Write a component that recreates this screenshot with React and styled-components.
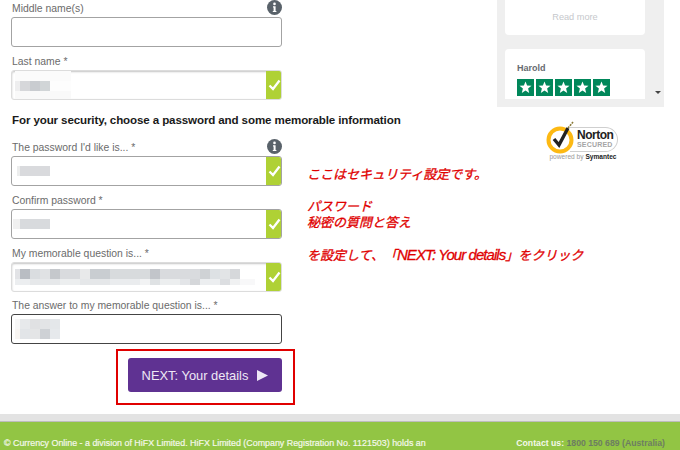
import React from "react";
import styled, { createGlobalStyle } from "styled-components";

const GlobalStyle = createGlobalStyle`
  html, body {
    margin: 0;
    padding: 0;
    height: 450px;
    overflow: hidden;
    background: #fff;
    font-family: "Liberation Sans", Arial, sans-serif;
  }
`;

const Page = styled.div`
  position: relative;
  width: 680px;
  height: 450px;
  overflow: hidden;
  display: flex;
  flex-direction: column;
`;

const Main = styled.main`
  display: flex;
  height: 414px;
  flex-shrink: 0;
`;

// form column
const Form = styled.form`
  width: 271px;
  margin-left: 11px;
  display: flex;
  flex-direction: column;
`;

const Field = styled.div`
  margin-top: ${(props) => props.$top ?? 6}px;
`;

const LabelRow = styled.div`
  display: flex;
  justify-content: space-between;
  align-items: flex-start;
  height: 17px;
`;

const Label = styled.label`
  font-size: 10.4px;
  line-height: 18px;
  margin-left: 1px;
  color: #6b6b6b;
`;

const InfoIcon = styled.svg`
  width: 15px;
  height: 15px;
  margin-top: 0;
`;

const borders = {
  plain: "border: 1px solid #a3a3a3;",
  soft: "border: 1px solid #dcdcdc; box-shadow: inset 0 1px 2px #c4c4c4;",
  focus: "border: 1px solid #444;",
};

const InputBox = styled.div`
  box-sizing: border-box;
  height: 30px;
  display: flex;
  align-items: center;
  justify-content: space-between;
  background: #fff;
  border-radius: 3px;
  overflow: hidden;
  ${(props) => borders[props.$tone || "plain"]}
`;

const CheckTab = styled.div`
  width: 16px;
  height: 30px;
  flex-shrink: 0;
  margin-right: -1px;
  background: #afd135;
  display: flex;
  align-items: center;
  justify-content: center;
`;

const Blur = styled.div`
  display: flex;
  flex-direction: column;
  margin-left: ${(props) => props.$left}px;
`;

const BlurRow = styled.div`
  display: flex;
  height: ${(props) => props.$h || 10}px;
`;

const BlurCell = styled.span`
  display: block;
  height: 100%;
  width: ${(props) => props.$w}px;
  background: ${(props) => props.$c};
`;

const Heading = styled.h2`
  margin: 0 0 0 1px;
  height: 39px;
  font-size: 11.6px;
  line-height: 39px;
  letter-spacing: -0.13px;
  font-weight: 700;
  color: #1a1a1a;
  white-space: nowrap;
`;

const NextButton = styled.button`
  box-sizing: border-box;
  width: 154px;
  height: 34px;
  margin: 14px 0 0 auto;
  padding: 0;
  border: 0;
  border-radius: 3px;
  background: #5f3292;
  color: #eee8f5;
  font-family: inherit;
  font-size: 12.9px;
  display: flex;
  align-items: center;
  justify-content: center;
  gap: 9px;
`;

const Triangle = styled.svg`
  width: 11px;
  height: 11px;
`;

// right hand column
const Aside = styled.aside`
  width: 167px;
  margin-left: 215px;
  display: flex;
  flex-direction: column;
  align-items: center;
`;

const Reviews = styled.div`
  position: relative;
  box-sizing: border-box;
  width: 167px;
  height: 107px;
  padding-left: 8px;
  background: #efefef;
  align-self: stretch;
`;

const ReadCard = styled.div`
  box-sizing: border-box;
  width: 140px;
  height: 35px;
  background: #fff;
  border-radius: 0 0 4px 4px;
  font-size: 9.2px;
  line-height: 35px;
  text-align: center;
  color: #c6c8cc;
`;

const ReviewCard = styled.div`
  box-sizing: border-box;
  width: 140px;
  height: 50px;
  margin-top: 14px;
  padding: 13px 12px 0;
  background: #fff;
  border-radius: 4px 4px 0 0;
`;

const Reviewer = styled.div`
  font-size: 9px;
  line-height: 12px;
  font-weight: 700;
  color: #666a70;
`;

const Stars = styled.div`
  display: flex;
  gap: 2px;
  margin-top: 5px;
`;

const Star = styled.svg`
  width: 17px;
  height: 17px;
  background: #00875a;
`;

const ScrollArrow = styled.span`
  position: absolute;
  right: 3px;
  top: 91px;
  width: 0;
  height: 0;
  border-left: 3px solid transparent;
  border-right: 3px solid transparent;
  border-top: 3px solid #444;
`;

const Norton = styled.div`
  margin-top: 14px;
  margin-left: 5px;
  width: 74px;
  display: flex;
  flex-direction: column;
  align-items: center;
`;

const Seal = styled.div`
  display: flex;
  align-items: center;
  height: 33px;
  width: 74px;
`;

const SealMark = styled.svg`
  width: 30px;
  height: 33px;
  flex-shrink: 0;
  z-index: 1;
`;

const SealPill = styled.div`
  box-sizing: border-box;
  height: 25px;
  width: 48px;
  margin-left: -6px;
  margin-top: 3px;
  padding-left: 7px;
  border: 1px solid #cfcfcf;
  border-left: 0;
  border-radius: 0 13px 13px 0;
  display: flex;
  flex-direction: column;
  justify-content: center;
`;

const SealName = styled.span`
  font-size: 12px;
  line-height: 12px;
  font-weight: 700;
  letter-spacing: -0.5px;
  color: #222;
`;

const SealSub = styled.span`
  font-size: 7px;
  line-height: 8px;
  font-weight: 700;
  letter-spacing: 0.2px;
  color: #a5a5a5;
`;

const PoweredBy = styled.div`
  margin-top: -2px;
  font-size: 6.6px;
  line-height: 9px;
  color: #999;
  white-space: nowrap;

  b {
    color: #222;
  }
`;

// footer
const FooterBand = styled.div`
  height: 7px;
  flex-shrink: 0;
  background: #e3e3e3;
  border-bottom: 1px solid #bdbdbd;
`;

const Footer = styled.footer`
  flex: 1;
  background: #92c544;
  display: flex;
  justify-content: space-between;
  padding: 15px 15px 0 4px;
  font-size: 8.7px;
  line-height: 12px;
  color: #f4f8ea;
  white-space: nowrap;
`;

const Legal = styled.span`
  font-size: 8.9px;
  -webkit-text-stroke: 0.2px #f4f8ea;
`;

const Contact = styled.span`
  font-weight: 700;
`;

const Phone = styled.span`
  color: #6d7d62;
`;

// screenshot annotations lying over the page
const Note = styled.div`
  position: absolute;
  left: 307px;
  top: 167px;
  font-family: "Liberation Sans", "Noto Sans CJK JP", sans-serif;
  font-size: 13px;
  line-height: 16px;
  font-style: italic;
  color: #e00000;
  white-space: pre;
  text-spacing-trim: space-all;
  -webkit-text-stroke: 0.3px #e00000;
`;

const NoteLatin = styled.span`
  font-size: 15px;
  letter-spacing: -0.95px;
`;

const Highlight = styled.div`
  position: absolute;
  box-sizing: border-box;
  left: 116px;
  top: 349px;
  width: 179px;
  height: 56px;
  border: 2px solid #e00000;
`;

const Info = () => (
  <InfoIcon viewBox="0 0 15 15">
    <circle cx="7.5" cy="7.5" r="7.5" fill="#59626a" />
    <circle cx="7.5" cy="3.9" r="1.3" fill="#fff" />
    <path d="M6 6.2h2.6v4.7h.8v1.2H5.8v-1.2h.8V7.4H6z" fill="#fff" />
  </InfoIcon>
);

const Check = () => (
  <svg width="13" height="12" viewBox="0 0 13 12">
    <path d="M1.5 6.5l3.5 3.5 6.5-8.5" fill="none" stroke="#fff" strokeWidth="2.3" />
  </svg>
);

const Patch = ({ left, rows }) => (
  <Blur $left={left}>
    {rows.map((row, i) => (
      <BlurRow key={i} $h={row.h}>
        {row.cells.map(([w, c], j) => (
          <BlurCell key={j} $w={w} $c={c} />
        ))}
      </BlurRow>
    ))}
  </Blur>
);

const lastNamePatch = [
  { cells: [[56, "#fbfbfb"]] },
  { cells: [[5, "#eeeeef"], [10, "#d6d7da"], [10, "#c9ccd0"], [10, "#d1d5d7"], [21, "#fdfdfd"]] },
  { h: 9, cells: [[56, "#f9f9f9"]] },
];

const passwordPatch = [
  { cells: [[3, "#eceded"], [30, "#d9dadd"]] },
];

const confirmPatch = [
  { cells: [[7, "#f0f0f0"], [30, "#d8dadd"]] },
];

const questionPatch = [
  {
    cells: [
      [5, "#e2e3e6"], [10, "#b9bdc3"], [10, "#dadde0"], [10, "#e0e2e4"], [10, "#c5c8cc"], [20, "#d9dbde"],
      [10, "#e8e9ea"], [20, "#c9cdd1"], [40, "#d8dbdd"], [10, "#c2c5ca"], [40, "#d9dbde"],
      [10, "#cfd2d5"], [10, "#dde1e4"], [10, "#e2e4e6"], [10, "#d6d8db"],
    ],
  },
  {
    h: 6,
    cells: [
      [15, "#eceef0"], [30, "#e6e8ea"], [20, "#eceeef"], [30, "#e5e7e9"], [30, "#eaecee"], [10, "#f2f3f4"],
      [10, "#dfe2e4"], [20, "#eceeef"], [10, "#e3e5e8"], [10, "#d5d7da"], [20, "#eceef0"], [10, "#dcdee1"],
      [10, "#f0f1f2"], [15, "#f8f8f9"],
    ],
  },
];

const answerPatch = [
  { cells: [[5, "#f7f7f7"], [10, "#e7e9eb"], [10, "#e0e1e3"], [10, "#e3e4e6"], [10, "#e4e7ea"]] },
  { cells: [[5, "#f8f5f2"], [10, "#e2e5e8"], [10, "#e4e5e6"], [10, "#ced1d5"], [10, "#e6e9ec"]] },
];

const App = () => {
  return (
    <Page>
      <GlobalStyle />
      <Main>
        <Form>
          <Field $top={0}>
            <LabelRow>
              <Label>Middle name(s)</Label>
              <Info />
            </LabelRow>
            <InputBox />
          </Field>
          <Field>
            <LabelRow>
              <Label>Last name *</Label>
            </LabelRow>
            <InputBox $tone="soft">
              <Patch left={3} rows={lastNamePatch} />
              <CheckTab>
                <Check />
              </CheckTab>
            </InputBox>
          </Field>
          <Heading>For your security, choose a password and some memorable information</Heading>
          <Field $top={0}>
            <LabelRow>
              <Label>The password I'd like is... *</Label>
              <Info />
            </LabelRow>
            <InputBox>
              <Patch left={5} rows={passwordPatch} />
              <CheckTab>
                <Check />
              </CheckTab>
            </InputBox>
          </Field>
          <Field>
            <LabelRow>
              <Label>Confirm password *</Label>
            </LabelRow>
            <InputBox>
              <Patch left={1} rows={confirmPatch} />
              <CheckTab>
                <Check />
              </CheckTab>
            </InputBox>
          </Field>
          <Field>
            <LabelRow>
              <Label>My memorable question is... *</Label>
            </LabelRow>
            <InputBox $tone="soft">
              <Patch left={3} rows={questionPatch} />
              <CheckTab>
                <Check />
              </CheckTab>
            </InputBox>
          </Field>
          <Field $top={5}>
            <LabelRow>
              <Label>The answer to my memorable question is... *</Label>
            </LabelRow>
            <InputBox $tone="focus">
              <Patch left={3} rows={answerPatch} />
            </InputBox>
          </Field>
          <NextButton type="button">
            NEXT: Your details
            <Triangle viewBox="0 0 11 11">
              <path d="M0 0l11 5.5L0 11z" fill="#eee8f5" />
            </Triangle>
          </NextButton>
        </Form>
        <Aside>
          <Reviews>
            <ReadCard>Read more</ReadCard>
            <ReviewCard>
              <Reviewer>Harold</Reviewer>
              <Stars>
                {[0, 1, 2, 3, 4].map((n) => (
                  <Star key={n} viewBox="0 0 17 17">
                    <path
                      d="M8.5 2.5l1.6 4.1 4.4.2-3.4 2.8 1.1 4.3-3.7-2.4-3.7 2.4 1.1-4.3-3.4-2.8 4.4-.2z"
                      fill="#fff"
                    />
                  </Star>
                ))}
              </Stars>
            </ReviewCard>
            <ScrollArrow />
          </Reviews>
          <Norton>
            <Seal>
              <SealMark viewBox="0 0 30 33">
                <circle cx="14" cy="19" r="11.5" fill="#fff" stroke="#fdb913" strokeWidth="4" />
                <path d="M8 18l5 6 9-17" fill="none" stroke="#222" strokeWidth="3.4" />
                <path d="M22 7l5-6" stroke="#8a7a3a" strokeWidth="1.6" strokeDasharray="2 1" />
              </SealMark>
              <SealPill>
                <SealName>Norton</SealName>
                <SealSub>SECURED</SealSub>
              </SealPill>
            </Seal>
            <PoweredBy>
              powered by <b>Symantec</b>
            </PoweredBy>
          </Norton>
        </Aside>
      </Main>
      <FooterBand />
      <Footer>
        <Legal>© Currency Online - a division of HiFX Limited. HiFX Limited (Company Registration No. 1121503) holds an</Legal>
        <Contact>
          Contact us: <Phone>1800 150 689 (Australia)</Phone>
        </Contact>
      </Footer>
      <Note>
        {"ここはセキュリティ設定です。\n\nパスワード\n秘密の質問と答え\n\nを設定して、「"}
        <NoteLatin>NEXT: Your details</NoteLatin>
        {"」をクリック"}
      </Note>
      <Highlight />
    </Page>
  );
};

export default App;
